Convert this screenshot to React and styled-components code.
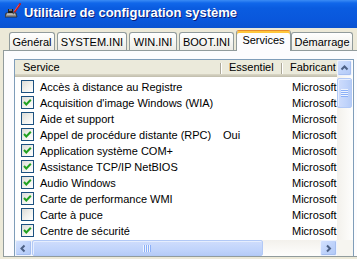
import React from 'react';
import styled, { createGlobalStyle } from 'styled-components';

const GlobalStyle = createGlobalStyle`
  html, body {
    margin: 0;
    padding: 0;
    background: #ece9d8;
  }
  body {
    font-family: "Liberation Sans", Arial, sans-serif;
    font-size: 11px;
    color: #000;
  }
`;

const Window = styled.div`
  width: 357px;
  height: 259px;
  overflow: hidden;
  display: flex;
  flex-direction: column;
  background: #ece9d8;
`;

const TitleBar = styled.div`
  height: 28px;
  flex-shrink: 0;
  box-sizing: border-box;
  padding: 3px 0 0 5px;
  display: flex;
  align-items: flex-start;
  gap: 3px;
  background: linear-gradient(
    to bottom,
    #3b8cf5 0px,
    #1167ea 3px,
    #0a5ce0 8px,
    #0957dc 20px,
    #0a52d0 28px
  );
`;

const Title = styled.span`
  margin-top: 2px;
  font: bold 13px/15px "Liberation Sans", Arial, sans-serif;
  color: #fff;
  text-shadow: 1px 1px 0 #0a1d7a;
  white-space: nowrap;
`;

const Body = styled.div`
  flex: 1;
  min-height: 0;
  display: flex;
  flex-direction: column;
  align-items: flex-start;
  padding: 2px 0 2px 3px;
`;

const TabStrip = styled.div`
  height: 20px;
  display: flex;
  align-items: flex-end;
  gap: 2px;
  padding-left: 6px;
  position: relative;
  z-index: 1;
`;

const Tab = styled.div`
  box-sizing: border-box;
  width: ${p => p.$w}px;
  height: ${p => (p.$active ? 21 : 18)}px;
  margin-bottom: ${p => (p.$active ? -1 : 0)}px;
  margin-right: ${p => (p.$active ? -2 : 0)}px;
  padding-top: 3px;
  border: 1px solid ${p => (p.$active ? '#e68b2c' : '#919b9c')};
  border-bottom: none;
  border-left-color: #919b9c;
  border-right-color: #919b9c;
  border-radius: 3px 3px 0 0;
  text-align: center;
  line-height: 13px;
  white-space: nowrap;
  background: ${p =>
    p.$active
      ? '#fcfcfe'
      : 'linear-gradient(to bottom, #ffffff 0%, #f7f7f4 45%, #ecebe5 100%)'};
  box-shadow: ${p => (p.$active ? 'inset 0 2px 0 #ffc73c' : 'none')};
`;

const Page = styled.div`
  box-sizing: border-box;
  width: 362px;
  flex: 1;
  min-height: 0;
  display: flex;
  flex-direction: column;
  border: 1px solid #919b9c;
  background: #fcfcfe;
  padding: 8px 10px 0;
`;

const ListBox = styled.div`
  flex: 1;
  min-height: 0;
  display: grid;
  grid-template-columns: 1fr 16px;
  grid-template-rows: 1fr 16px;
  border: 1px solid #7f9db9;
  border-bottom: none;
  background: #fff;
`;

const ListMain = styled.div`
  overflow: hidden;
  min-width: 0;
`;

const Columns = styled.div`
  display: grid;
  grid-template-columns: 205px 61px 120px;
`;

const Header = styled(Columns)`
  height: 17px;
  background: #ebeadb;
  box-shadow: inset 0 -1px 0 #c4c1b0, inset 0 -2px 0 #cdcab9, inset 0 -3px 0 #d6d3c2;
`;

const HeadCell = styled.div`
  line-height: 14px;
  padding-left: ${p => p.$pad}px;
  white-space: nowrap;
  background: ${p =>
    p.$sep
      ? 'linear-gradient(#aca899, #aca899) 0 3px / 1px 11px no-repeat, linear-gradient(#fff, #fff) 1px 3px / 1px 11px no-repeat'
      : 'none'};
`;

const Rows = styled.div`
  padding-top: 2px;
`;

const Row = styled(Columns)`
  height: 16px;
  line-height: 16px;
`;

const NameCell = styled.div`
  display: flex;
  align-items: flex-start;
  gap: 6px;
  padding-left: 6px;
  overflow: hidden;
  white-space: nowrap;
`;

const Cell = styled.div`
  padding-left: ${p => p.$pad}px;
  white-space: nowrap;
`;

const Check = styled.span`
  box-sizing: border-box;
  flex-shrink: 0;
  width: 13px;
  height: 13px;
  margin-top: 1px;
  border: 1px solid #1c5180;
  background: linear-gradient(135deg, #dcdcd7 0%, #f2f2ee 55%, #ffffff 100%);
  display: flex;
  align-items: center;
  justify-content: center;
`;

const VScroll = styled.div`
  display: flex;
  flex-direction: column;
  align-items: flex-start;
  background: linear-gradient(to right, #f3f1ec, #fefefd);
`;

const HScroll = styled.div`
  display: flex;
  align-items: flex-start;
  background: linear-gradient(to bottom, #f3f1ec, #fefefd);
`;

const Track = styled.div`
  flex: 1;
`;

const Corner = styled.div`
  background: #f6f5f0;
`;

const ArrowButton = styled.div`
  box-sizing: border-box;
  flex-shrink: 0;
  width: ${p => p.$w}px;
  height: ${p => p.$h}px;
  border: 1px solid #eef3fe;
  border-radius: 2px;
  background: linear-gradient(135deg, #d3e1fd 0%, #bfd3fb 50%, #b2c9f6 100%);
  box-shadow: inset -1px -1px 0 #a6bff0;
  display: flex;
  align-items: center;
  justify-content: center;
`;

const Thumb = styled.div`
  box-sizing: border-box;
  flex-shrink: 0;
  width: ${p => p.$w}px;
  height: ${p => p.$h}px;
  margin: ${p => p.$m};
  border: 1px solid #b2c9f6;
  border-radius: 2px;
  background: ${p =>
    p.$vertical
      ? 'linear-gradient(to right, #cfddfc, #c1d4fb 60%, #b6ccf7)'
      : 'linear-gradient(to bottom, #cfddfc, #c1d4fb 60%, #b6ccf7)'};
  box-shadow: inset 1px 1px 0 #e6eefe;
  display: flex;
  align-items: center;
  justify-content: center;
`;

const Grip = styled.div`
  display: flex;
  flex-direction: ${p => (p.$vertical ? 'column' : 'row')};
  gap: 1px;
`;

const GripLine = styled.span`
  display: block;
  width: ${p => (p.$vertical ? 7 : 1)}px;
  height: ${p => (p.$vertical ? 1 : 7)}px;
  background: #8cb0f8;
  box-shadow: ${p => (p.$vertical ? '0 -1px 0 #eef4fe' : '-1px 0 0 #eef4fe')};
`;

const AppIcon = () => (
  <svg width="16" height="16" viewBox="0 0 16 16">
    <path d="M1 10 L11 10 L12 14 L0 14 Z" fill="#8d8d8d" stroke="#2a2a2a" strokeWidth="0.8" />
    <path d="M2 11 L10 11" stroke="#e6e6e6" strokeWidth="1" />
    <path d="M3 6 L8 6 L8 10 L3 10 Z" fill="#1e1e1e" />
    <path d="M4 7 L7 7" stroke="#bdbdbd" strokeWidth="1" />
    <path d="M15 1 L9.5 9" stroke="#c81818" strokeWidth="2" strokeLinecap="round" />
    <path d="M14 1.5 L9.2 8.3" stroke="#ff8a8a" strokeWidth="0.6" />
    <path d="M9.5 9 L8 11" stroke="#555" strokeWidth="1.4" />
  </svg>
);

const Chevron = ({ dir }) => {
  const d = {
    up: 'M1.5 5.5 L4.5 2.5 L7.5 5.5',
    left: 'M5.5 1.5 L2.5 4.5 L5.5 7.5',
    right: 'M3 1.5 L6 4.5 L3 7.5',
  }[dir];
  return (
    <svg width="9" height="9" viewBox="0 0 9 9">
      <path d={d} fill="none" stroke="#4d6185" strokeWidth="2" />
    </svg>
  );
};

const CheckMark = () => (
  <svg width="11" height="11" viewBox="0 0 11 11">
    <polyline points="2,5 4.3,7.5 8.8,2.8" fill="none" stroke="#21a121" strokeWidth="2" />
  </svg>
);

const tabs = [
  { label: 'Général', w: 46 },
  { label: 'SYSTEM.INI', w: 70 },
  { label: 'WIN.INI', w: 48 },
  { label: 'BOOT.INI', w: 55 },
  { label: 'Services', w: 55, active: true },
  { label: 'Démarrage', w: 62 },
];

const services = [
  { name: 'Accès à distance au Registre', on: false, essential: '' },
  { name: "Acquisition d'image Windows (WIA)", on: true, essential: '' },
  { name: 'Aide et support', on: false, essential: '' },
  { name: 'Appel de procédure distante (RPC)', on: true, essential: 'Oui' },
  { name: 'Application système COM+', on: true, essential: '' },
  { name: 'Assistance TCP/IP NetBIOS', on: true, essential: '' },
  { name: 'Audio Windows', on: true, essential: '' },
  { name: 'Carte de performance WMI', on: true, essential: '' },
  { name: 'Carte à puce', on: false, essential: '' },
  { name: 'Centre de sécurité', on: true, essential: '' },
];

export default function App() {
  return (
    <>
      <GlobalStyle />
      <Window>
        <TitleBar>
          <AppIcon />
          <Title>Utilitaire de configuration système</Title>
        </TitleBar>
        <Body>
          <TabStrip>
            {tabs.map(t => (
              <Tab key={t.label} $w={t.w} $active={t.active}>
                {t.label}
              </Tab>
            ))}
          </TabStrip>
          <Page>
            <ListBox>
              <ListMain>
                <Header>
                  <HeadCell $pad={8}>Service</HeadCell>
                  <HeadCell $pad={9} $sep>Essentiel</HeadCell>
                  <HeadCell $pad={9} $sep>Fabricant</HeadCell>
                </Header>
                <Rows>
                  {services.map(s => (
                    <Row key={s.name}>
                      <NameCell>
                        <Check>{s.on && <CheckMark />}</Check>
                        <span>{s.name}</span>
                      </NameCell>
                      <Cell $pad={3}>{s.essential}</Cell>
                      <Cell $pad={11}>Microsoft</Cell>
                    </Row>
                  ))}
                </Rows>
              </ListMain>
              <VScroll>
                <ArrowButton $w={15} $h={16}>
                  <Chevron dir="up" />
                </ArrowButton>
                <Thumb $vertical $w={15} $h={30} $m="2px 0 0">
                  <Grip $vertical>
                    <GripLine $vertical />
                    <GripLine $vertical />
                    <GripLine $vertical />
                    <GripLine $vertical />
                  </Grip>
                </Thumb>
              </VScroll>
              <HScroll>
                <ArrowButton $w={17} $h={16}>
                  <Chevron dir="left" />
                </ArrowButton>
                <Thumb $w={231} $h={16} $m="0">
                  <Grip>
                    <GripLine />
                    <GripLine />
                    <GripLine />
                    <GripLine />
                  </Grip>
                </Thumb>
                <Track />
                <ArrowButton $w={17} $h={16}>
                  <Chevron dir="right" />
                </ArrowButton>
              </HScroll>
              <Corner />
            </ListBox>
          </Page>
        </Body>
      </Window>
    </>
  );
}
